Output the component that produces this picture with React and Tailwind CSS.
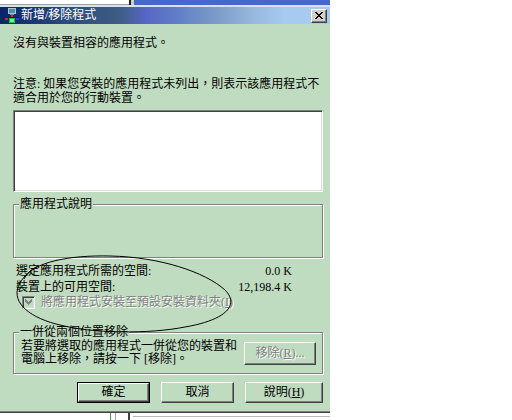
import React from 'react';

const Btn = ({ children, def, disabled, className }) => (
    <div className={`${def ? 'border border-black' : ''} ${className}`}>
        <div className="h-full flex items-center justify-center border border-t-white border-l-white border-b-[#404040] border-r-[#404040] shadow-[inset_-1px_-1px_0_#808080]">
            <span className={disabled ? 'text-[#808080] [text-shadow:1px_1px_0_#fff]' : ''}>{children}</span>
        </div>
    </div>
);

const Group = ({ label, className, children }) => (
    <div className={`relative border border-[#808080] shadow-[inset_1px_1px_0_#fff,1px_1px_0_#fff] ${className}`}>
        <span className="absolute left-[5px] top-[-7px] px-[1px] bg-[#c0dcc0] leading-[13px]">{label}</span>
        {children}
    </div>
);

const AppIcon = () => (
    <svg width="16" height="16" viewBox="0 0 16 16" shapeRendering="crispEdges">
        <rect x="4" y="0" width="8" height="6" fill="#c0c0c0" />
        <rect x="5" y="1" width="6" height="4" fill="#4090c0" />
        <rect x="6" y="6" width="4" height="1" fill="#808080" />
        <rect x="7" y="7" width="2" height="3" fill="#ff2020" />
        <rect x="1" y="9" width="14" height="1" fill="#202020" />
        <rect x="1" y="10" width="3" height="2" fill="#e02020" />
        <rect x="12" y="10" width="3" height="2" fill="#2040e0" />
        <rect x="5" y="10" width="6" height="5" fill="#20c040" />
        <rect x="6" y="11" width="4" height="3" fill="#60ff80" />
    </svg>
);

export default function App() {
    return (
        <div className="w-[512px] h-[420px] bg-white overflow-hidden text-[12px] leading-[13px] text-black [font-family:'Liberation_Serif','Noto_Sans_CJK_TC',serif]">
            <div className="w-[330px]">
                {/* window behind, top edge */}
                <div className="flex h-[5px]">
                    <div className="w-[129px] border-b border-[#a0a0a0]" />
                    <div className="w-[2px] bg-[#202020]" />
                    <div className="w-[3px] bg-[#d0d0d0]" />
                    <div className="flex-1 bg-[#4668cc]" />
                </div>
                <div className="h-[2px] bg-[#d6e4f2]" />

                {/* title bar */}
                <div className="h-[17px] flex items-center pl-[4px] pr-[3px] bg-[linear-gradient(to_right,#0a246a_0%,#2c4a7c_20%,#3d5d82_36%,#5666c4_44%,#6282c8_55%,#7d9cc8_66%,#96b6dc_76%,#a6caf0_86%,#a6caf0_100%)]">
                    <AppIcon />
                    <span className="ml-[1px] text-white">新增/移除程式</span>
                    <div className="ml-auto w-[16px] h-[14px] bg-[#d4d0c8] border border-t-white border-l-white border-b-[#404040] border-r-[#404040] shadow-[inset_-1px_-1px_0_#808080] flex items-center justify-center">
                        <svg width="8" height="7" viewBox="0 0 8 7" shapeRendering="crispEdges">
                            <path d="M0 0h2v1h-2zM6 0h2v1h-2zM1 1h2v1h-2zM5 1h2v1h-2zM2 2h4v1h-4zM3 3h2v1h-2zM2 4h4v1h-4zM1 5h2v1h-2zM5 5h2v1h-2zM0 6h2v1h-2zM6 6h2v1h-2z" fill="#000" />
                        </svg>
                    </div>
                </div>

                {/* dialog body */}
                <div className="relative bg-[#c0dcc0] pl-[13px] pr-[7px] pt-[13px] pb-[8px]">
                    <p>沒有與裝置相容的應用程式。</p>
                    <p className="mt-[27px] leading-[14px] whitespace-nowrap">
                        注意: 如果您安裝的應用程式未列出，則表示該應用程式不<br />
                        適合用於您的行動裝置。
                    </p>

                    <div className="mt-[5px] h-[82px] bg-white border border-t-[#808080] border-l-[#808080] border-b-white border-r-white shadow-[inset_1px_1px_0_#404040,inset_-1px_-1px_0_#d4e4d4]" />

                    <Group label="應用程式說明" className="mt-[12px] h-[54px]" />

                    <div className="mt-[5px] ml-[3px] w-[276px] leading-[16px]">
                        <div className="flex justify-between">
                            <span>選定應用程式所需的空間:</span>
                            <span>0.0 K</span>
                        </div>
                        <div className="flex justify-between">
                            <span>裝置上的可用空間:</span>
                            <span>12,198.4 K</span>
                        </div>
                    </div>

                    <div className="mt-[1px] ml-[9px] h-[13px] flex items-center">
                        <div className="w-[13px] h-[13px] border border-t-[#808080] border-l-[#808080] border-b-white border-r-white shadow-[inset_1px_1px_0_#404040,inset_-1px_-1px_0_#d4e4d4] flex items-center justify-center">
                            <svg width="7" height="7" viewBox="0 0 7 7" shapeRendering="crispEdges">
                                <path d="M6 0h1v3h-1zM5 1h1v3h-1zM4 2h1v3h-1zM3 3h1v3h-1zM2 2h1v3h-1zM1 1h1v3h-1zM0 0h1v3h-1z" fill="#808080" />
                            </svg>
                        </div>
                        <span className="ml-[6px] text-[#808080] [text-shadow:1px_1px_0_#fff]">
                            將應用程式安裝至預設安裝資料夾(<span className="underline">I</span>)
                        </span>
                    </div>

                    <Group label="一併從兩個位置移除" className="mt-[23px] h-[42px]">
                        <div className="flex items-center justify-between pt-[7px] pl-[7px] pr-[6px]">
                            <p>
                                若要將選取的應用程式一併從您的裝置和<br />
                                電腦上移除，請按一下 [移除]。
                            </p>
                            <Btn disabled className="w-[72px] h-[23px]">
                                移除(<span className="underline">R</span>)...
                            </Btn>
                        </div>
                    </Group>

                    <div className="mt-[8px] flex justify-end gap-[11px]">
                        <Btn def className="w-[73px] h-[21px]">確定</Btn>
                        <Btn className="w-[73px] h-[21px]">取消</Btn>
                        <Btn className="w-[78px] h-[21px]">
                            說明(<span className="underline">H</span>)
                        </Btn>
                    </div>

                    {/* hand-drawn mark */}
                    <svg className="absolute left-0 top-0 pointer-events-none" width="330" height="388" viewBox="0 24 330 388">
                        <path
                            d="M24 279 C32 262, 70 255, 110 256 C160 257, 205 272, 225 290 C240 305, 226 320, 185 327 C150 334, 92 334, 56 324 C26 316, 10 300, 20 283 C24 276, 30 270, 38 266"
                            fill="none"
                            stroke="#000"
                            strokeWidth="1"
                        />
                    </svg>
                </div>
                <div className="h-px bg-[#808080]" />
                <div className="h-px bg-[#404040]" />

                {/* window behind, bottom edge */}
                <div className="flex h-[7px]">
                    <div className="w-[110px]" />
                    <div className="w-px bg-[#40a040]" />
                    <div className="w-[4px]" />
                    <div className="w-px bg-[#a0a0a0]" />
                    <div className="w-[12px]" />
                    <div className="w-[2px] bg-[#404040]" />
                    <div className="w-[3px]" />
                    <div className="flex-1 mt-[3px] h-px bg-[#b8b8b8]" />
                </div>
            </div>
        </div>
    );
}
